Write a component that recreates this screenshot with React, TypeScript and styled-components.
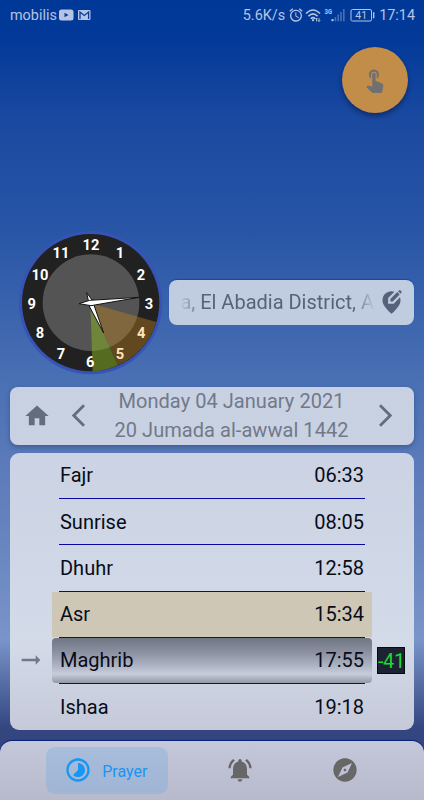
import React from "react";
import styled, { createGlobalStyle } from "styled-components";
import {
  MdAlarm, MdTouchApp, MdEditLocationAlt, MdHome, MdArrowBackIosNew, MdArrowForwardIos,
  MdArrowRightAlt, MdNotificationsActive, MdExplore, MdTimelapse,
} from "react-icons/md";

const Global = createGlobalStyle`
  * { box-sizing: border-box; }
  body { margin: 0; }
`;

const Screen = styled.main`
  width: 424px;
  height: 800px;
  overflow: hidden;
  display: flex;
  flex-direction: column;
  font-family: Roboto, "Liberation Sans", sans-serif;
  background: linear-gradient(180deg, #003897 0, #033a99 40px, #1a49a0 120px, #2855a6 230px, #4a70b4 380px, #6480bd 510px, #7894c8 640px, #344680 728px, #2f4079 800px);
`;

const StatusBar = styled.header`
  height: 30px;
  padding: 0 9px 0 10px;
  display: flex;
  align-items: center;
  color: #b5c4e3;
  font-size: 14.4px;
  white-space: nowrap;
`;
const Carrier = styled.span`
  margin-right: 2px;
`;
const StatusRight = styled.div`
  margin-left: auto;
  display: flex;
  align-items: center;
`;
const Speed = styled.span`
  margin-right: 3px;
`;
const Time = styled.span`
  margin-left: 3px;
`;

const Fab = styled.button`
  flex: none;
  align-self: flex-end;
  margin: 17px 16.5px 0 0;
  width: 66px;
  height: 66px;
  padding: 0 0 2px;
  border: 0;
  border-radius: 50%;
  background: #c18d49;
  box-shadow: 0 3px 5px rgba(0, 10, 50, 0.45);
  color: #707070;
  display: grid;
  place-items: center;
  font-size: 27px;
`;

const ClockRow = styled.section`
  flex: none;
  margin: 112px 0 0 15px;
  height: 155px;
  display: flex;
`;
const ClockFace = styled.svg`
  flex: none;
  width: 150px;
  height: 155px;
  font-family: Roboto, sans-serif;
`;
const Place = styled.div`
  margin: 54.7px 0 0 4.4px;
  width: 244.2px;
  height: 45px;
  border-radius: 8px;
  padding: 0 9px 0 11px;
  background: #c0cce0;
  box-shadow: 0 -1px 1px #164b9f;
  display: flex;
  align-items: center;
  justify-content: space-between;
  color: #56617a;
  font-size: 27px;
`;
const PlaceName = styled.span`
  width: 195px;
  margin-top: -1px;
  overflow: hidden;
  white-space: nowrap;
  font-size: 20px;
  color: #596377;
  mask-image: linear-gradient(90deg, transparent, #000 22px, #000 172px, transparent);
`;

const DateBar = styled.section`
  flex: none;
  margin: 7.2px 10.4px 0 10.4px;
  height: 57.5px;
  border-radius: 8px;
  background: linear-gradient(#c8d1e3, #c9d1e2);
  box-shadow: 0 2px 5px rgba(40, 65, 115, 0.55);
  display: grid;
  grid-template-columns: 54px 28px 1fr 43px;
  align-items: center;
  color: #646d7e;
`;
const BarIcon = styled.span<{ $size: number; $inset?: number }>`
  display: grid;
  place-items: center;
  padding-right: ${(p) => p.$inset ?? 0}px;
  font-size: ${(p) => p.$size}px;
`;
const Dates = styled.div`
  text-align: center;
  font-size: 20px;
  line-height: 28.5px;
  letter-spacing: 0.05px;
  color: #717989;
  white-space: nowrap;
`;

const Schedule = styled.section`
  flex: none;
  margin: 8.1px 10.4px 0 10.4px;
  height: 277px;
  border-radius: 9px;
  overflow: hidden;
  background: linear-gradient(#cbd3e4 0, #d3dae8 190px, #c5c9d9 277px);
`;
const Row = styled.div`
  height: 45.25px;
  display: grid;
  grid-template-columns: 41.6px 320px 41px;
  align-items: center;
`;
const Entry = styled.div<{ $look: "plain" | "past" | "next" }>`
  height: 45.25px;
  padding: 0 8px;
  display: flex;
  align-items: center;
  justify-content: space-between;
  font-size: 20px;
  color: #080c18;
  background: ${(p) =>
    p.$look === "past" ? "#cec7b6"
    : p.$look === "next" ? "linear-gradient(#707683 0, #8a90a0 14px, #aeb4c4 28px, #c8cddb 36px, #9298a5 45px)"
    : "transparent"};
  border-radius: ${(p) => (p.$look === "next" ? "4px" : "0")};
`;
const Rule = styled.hr`
  width: 306px;
  height: 1px;
  margin: 0 0 0 48.6px;
  border: 0;
  background: #0909a2;
`;
const Pointer = styled.span`
  display: grid;
  place-items: center;
  color: #727888;
  font-size: 28px;
`;
const Remaining = styled.span`
  margin-left: 5px;
  width: 28px;
  height: 27px;
  border: 1px solid #050a13;
  background: #1d2431;
  color: #20d636;
  font-size: 20px;
  line-height: 27px;
  letter-spacing: -0.4px;
  white-space: nowrap;
`;

const Nav = styled.nav`
  margin-top: 11.2px;
  flex: 1;
  border-radius: 12px 12px 0 0;
  background: linear-gradient(#c4c8da, #b6bacb);
  box-shadow: 0 -1px 1px #052078;
  display: flex;
  align-items: center;
  padding-left: 45.7px;
  color: #676767;
`;
const ActiveTab = styled.button`
  width: 122px;
  height: 47px;
  border: 0;
  border-radius: 9px;
  padding: 0 0 0 18.5px;
  display: flex;
  align-items: center;
  gap: 10px;
  background: linear-gradient(#a8bddc, #a0b4d3);
  color: #1995f3;
  font: 16px Roboto, sans-serif;
`;
const TabLabel = styled.span`
  padding-top: 2px;
`;
const Tab = styled.button<{ $gap: number }>`
  width: 28px;
  height: 28px;
  margin-left: ${(p) => p.$gap}px;
  padding: 0;
  border: 0;
  background: none;
  color: inherit;
  font-size: 28px;
  display: grid;
  place-items: center;
`;

const numerals: [string, number, number][] = [
  ["12", 228, 76], ["1", 315, 99], ["2", 378, 164], ["3", 402, 251], ["4", 379, 338], ["5", 315, 402],
  ["6", 226, 426], ["7", 138, 402], ["8", 75, 338], ["9", 50, 251], ["10", 75, 164], ["11", 138, 98],
];

const Clock = () => (
  <ClockFace viewBox="0 0 450 465">
    <circle cx="227" cy="233" r="215" fill="#3654b6" />
    <circle cx="227" cy="233" r="206" fill="#212121" />
    <circle cx="228" cy="233" r="145" fill="#545454" />
    <path d="M227 235L424 291A206 206 0 0 1 308 421Z" fill="#c2841f" fillOpacity="0.4" />
    <path d="M226 235L308 421A206 206 0 0 1 233 439Z" fill="#8ab61d" fillOpacity="0.5" />
    {numerals.map(([n, x, y]) => (
      <text key={n} x={x} y={y} textAnchor="middle" fontSize="44" fontWeight="700"
        fill={n === "4" || n === "5" ? "#ffe5b8" : "#fff"}>{n}</text>
    ))}
    <path d="M215 203L232 226L266 324L224 246Z" fill="#fff" stroke="#111" strokeWidth="3" />
    <path d="M192 236L224 226L372 217L228 242Z" fill="#fff" stroke="#111" strokeWidth="3" />
  </ClockFace>
);

const YouTubeGlyph = () => (
  <svg width="15" height="12" viewBox="0 0 15 12">
    <rect width="14.5" height="11" y=".5" rx="2.5" fill="currentColor" />
    <path d="M5.5 3.8L9.5 6L5.5 8.2Z" fill="#0b3c99" />
  </svg>
);
const MailGlyph = () => (
  <svg width="18" height="12" viewBox="0 0 18 12">
    <rect x="4" y="1" width="12.5" height="10" rx="1" fill="currentColor" />
    <path d="M6 10V3L10.3 6.5L14.6 3V10" fill="none" stroke="#0b3c99" strokeWidth="1.3" />
  </svg>
);
const SignalGlyphs = () => (
  <svg width="46" height="20" viewBox="0 0 46 20" fill="none" stroke="currentColor">
    <path d="M2 8.5Q9 1.5 16 8.5M4.4 11.2Q9 6.5 13.6 11.2M6.8 13.7Q9 11.5 11.2 13.7" strokeWidth="1.6" />
    <circle cx="9" cy="15.2" r="1.1" fill="currentColor" stroke="none" />
    <path d="M12.5 13V16.5M15 13V16.5M11.3 14.3L12.5 13L13.7 14.3M13.8 15.2L15 16.5L16.2 15.2" strokeWidth=".9" />
    <text x="20.5" y="8.5" fontSize="7.5" fontWeight="700" fill="currentColor" stroke="none" textLength="7.5" lengthAdjust="spacingAndGlyphs">3G</text>
    <path d="M28.5 16.2V14" strokeWidth="2" />
    <path d="M31.4 16.2V12M34.2 16.2V9.5M37 16.2V7M39.8 16.2V4" strokeWidth="1.6" opacity=".4" />
  </svg>
);
const Battery = () => (
  <svg width="26" height="20" viewBox="0 0 26 20">
    <rect x="1" y="4.5" width="20.5" height="11.5" rx="1.5" fill="none" stroke="currentColor" />
    <path d="M23.7 7.3V13.3" stroke="currentColor" strokeWidth="1.4" />
    <text x="11.2" y="14.1" fontSize="10.5" textAnchor="middle" fill="currentColor">41</text>
  </svg>
);

type Prayer = { name: string; time: string; look?: "past" | "next" };
const prayers: Prayer[] = [
  { name: "Fajr", time: "06:33" },
  { name: "Sunrise", time: "08:05" },
  { name: "Dhuhr", time: "12:58" },
  { name: "Asr", time: "15:34", look: "past" },
  { name: "Maghrib", time: "17:55", look: "next" },
  { name: "Ishaa", time: "19:18" },
];

export default function App() {
  return (
    <Screen>
      <Global />
      <StatusBar>
        <Carrier>mobilis</Carrier>
        <YouTubeGlyph />
        <MailGlyph />
        <StatusRight>
          <Speed>5.6K/s</Speed>
          <MdAlarm size={16} />
          <SignalGlyphs />
          <Battery />
          <Time>17:14</Time>
        </StatusRight>
      </StatusBar>
      <Fab aria-label="Touch"><MdTouchApp /></Fab>
      <ClockRow>
        <Clock />
        <Place>
          <PlaceName>a, El Abadia District, Aï</PlaceName>
          <MdEditLocationAlt />
        </Place>
      </ClockRow>
      <DateBar>
        <BarIcon $size={28}><MdHome /></BarIcon>
        <BarIcon $size={27}><MdArrowBackIosNew /></BarIcon>
        <Dates>
          <div>Monday 04 January 2021</div>
          <div>20 Jumada al-awwal 1442</div>
        </Dates>
        <BarIcon $size={27} $inset={13}><MdArrowForwardIos /></BarIcon>
      </DateBar>
      <Schedule>
        {prayers.map((p, i) => (
          <React.Fragment key={p.name}>
            {i > 0 && <Rule />}
            <Row>
              <Pointer>{p.look === "next" && <MdArrowRightAlt />}</Pointer>
              <Entry $look={p.look ?? "plain"}>
                <span>{p.name}</span>
                <span>{p.time}</span>
              </Entry>
              {p.look === "next" && <Remaining>-41</Remaining>}
            </Row>
          </React.Fragment>
        ))}
      </Schedule>
      <Nav>
        <ActiveTab><MdTimelapse size={28} /><TabLabel>Prayer</TabLabel></ActiveTab>
        <Tab $gap={58}><MdNotificationsActive /></Tab>
        <Tab $gap={77}><MdExplore /></Tab>
      </Nav>
    </Screen>
  );
}
